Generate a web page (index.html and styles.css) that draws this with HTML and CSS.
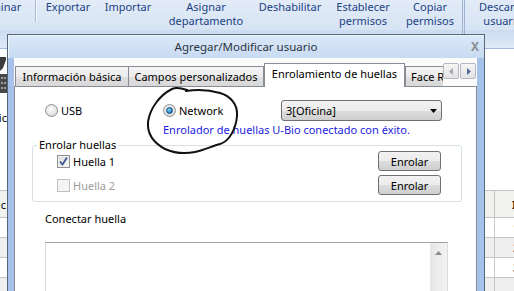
FILE: index.html
```html
<!DOCTYPE html>
<html lang="es">
<head>
    <meta charset="UTF-8">
    <meta name="viewport" content="width=device-width, initial-scale=1.0">
    <title>Agregar/Modificar usuario</title>
    <link rel="stylesheet" href="styles.css">
</head>
<body>
    <!-- Ventana principal (detrás del diálogo) -->
    <div class="app">
        <div class="ribbon">
            <div class="rb-btn w-elim">Eliminar</div>
            <div class="rb-sep"></div>
            <div class="rb-btn w-exp">Exportar</div>
            <div class="rb-btn w-imp">Importar</div>
            <div class="rb-btn w-asig">Asignar<br>departamento</div>
            <div class="rb-btn w-desh">Deshabilitar</div>
            <div class="rb-btn w-est">Establecer<br>permisos</div>
            <div class="rb-btn w-cop">Copiar<br>permisos</div>
            <div class="rb-sep doble"></div>
            <div class="rb-btn w-desc">Descargar<br>usuarios</div>
        </div>
        <div class="ribbon-foot">
            <span class="grp-label">Posibles usuarios</span>
        </div>
        <div class="work">
            <div class="side">
                <svg class="side-icon" width="7" height="36" viewBox="0 0 7 36">
                    <path d="M0 0 H6 L6 3 L3 11 L0 14 Z" fill="#3d3d3d"/>
                    <rect x="0" y="17" width="7" height="19" fill="#474747"/>
                    <rect x="1" y="20" width="2" height="2" fill="#9a9a9a"/>
                    <rect x="4" y="20" width="2" height="2" fill="#9a9a9a"/>
                    <rect x="1" y="25" width="2" height="2" fill="#9a9a9a"/>
                    <rect x="4" y="25" width="2" height="2" fill="#9a9a9a"/>
                    <rect x="1" y="30" width="2" height="2" fill="#9a9a9a"/>
                    <rect x="4" y="30" width="2" height="2" fill="#9a9a9a"/>
                </svg>
                <div class="side-text">Básic</div>
            </div>
        </div>
        <table class="grid">
            <colgroup>
                <col class="c1"><col class="c2"><col class="c3">
            </colgroup>
            <thead>
                <tr><th class="th-left">Básic</th><th></th><th class="th-id">ID</th></tr>
            </thead>
            <tbody>
                <tr><td></td><td></td><td class="td-id">1</td></tr>
                <tr class="alt"><td></td><td></td><td class="td-id">2</td></tr>
                <tr><td></td><td></td><td class="td-id">3</td></tr>
                <tr class="alt"><td></td><td></td><td></td></tr>
            </tbody>
        </table>
    </div>

    <!-- Diálogo -->
    <div class="dialog">
        <div class="titlebar">
            <span class="title">Agregar/Modificar usuario</span>
            <span class="close">X</span>
        </div>
        <div class="client">
            <div class="tabrow">
                <div class="tabs">
                    <div class="tab t1">Información básica</div>
                    <div class="tab t2">Campos personalizados</div>
                    <div class="tab active">Enrolamiento de huellas</div>
                    <div class="tab t4">Face Reconocimiento</div>
                </div>
                <div class="tab-arrows">
                    <div class="arr">
                        <svg width="5" height="7" viewBox="0 0 5 7"><path d="M4 0 V7 L0 3.5 Z" fill="#a3a8b3"/></svg>
                    </div>
                    <div class="arr">
                        <svg width="5" height="7" viewBox="0 0 5 7"><path d="M1 0 V7 L5 3.5 Z" fill="#55699c"/></svg>
                    </div>
                </div>
            </div>

            <div class="panel">
                <div class="row-device">
                    <label class="opt usb"><span class="radio"></span>USB</label>
                    <label class="opt net"><span class="radio on"></span>Network</label>
                    <div class="select">
                        <span>3[Oficina]</span>
                        <svg width="7" height="4" viewBox="0 0 7 4"><path d="M0 0 H7 L3.5 4 Z" fill="#000"/></svg>
                    </div>
                </div>
                <div class="status">Enrolador de huellas U-Bio conectado con éxito.</div>

                <fieldset class="group">
                    <legend>Enrolar huellas</legend>
                    <div class="finger">
                        <span class="check on">
                            <svg width="11" height="11" viewBox="0 0 11 11"><path d="M2 5.5 L4.5 8.5 L9 1.5" fill="none" stroke="#3f5690" stroke-width="1.8"/></svg>
                        </span>
                        <span class="finger-name">Huella 1</span>
                        <button class="btn">Enrolar</button>
                    </div>
                    <div class="finger off">
                        <span class="check"></span>
                        <span class="finger-name">Huella 2</span>
                        <button class="btn">Enrolar</button>
                    </div>
                </fieldset>

                <div class="conn-label">Conectar huella</div>
                <div class="log">
                    <div class="log-scroll">
                        <svg width="7" height="4" viewBox="0 0 7 4"><path d="M0 4 L3.5 0 L7 4 Z" fill="#8a8a8a"/></svg>
                    </div>
                </div>
            </div>
        </div>
    </div>

    <!-- Marca a mano alrededor de Network -->
    <svg class="mark" width="514" height="291" viewBox="0 0 514 291">
        <path d="M187 90 C181 88 176 87 172 89 C160 95 150 108 148 122 C147 134 154 143 165 149 C174 153 185 154 195 152 C205 150 212 146 220 144 C230 141 236 128 237 116 C238 104 230 96 220 93 C210 90 198 89 186 91" fill="none" stroke="#111" stroke-width="2" stroke-linecap="round"/>
    </svg>
</body>
</html>
```

FILE: styles.css
```css
body {
    margin: 0;
    width: 514px;
    height: 291px;
    overflow: hidden;
    position: relative;
    background: #fff;
    font-family: "Noto Sans", "Open Sans", sans-serif;
    font-size: 11px;
    color: #000;
}

/* ventana principal */
.ribbon {
    height: 30px;
    display: flex;
    background: linear-gradient(#e2ebf7, #d7e4f4);
    color: #1b4282;
    line-height: 14px;
}
.rb-btn {
    flex: none;
    text-align: center;
    margin-left: 4px;
    white-space: nowrap;
}
.w-elim { width: 60px; margin-left: -30px; }
.w-exp { width: 56px; }
.w-imp { width: 56px; }
.w-asig { width: 92px; }
.w-desh { width: 68px; }
.w-est { width: 70px; }
.w-cop { width: 56px; }
.w-desc { width: 75px; margin-left: 5px; }
.rb-sep {
    flex: none;
    width: 1px;
    height: 22px;
    margin-left: 5px;
    background: #a9bcd6;
    box-shadow: 1px 0 0 #f3f7fc;
}
.rb-sep.doble {
    width: 1px;
    height: 34px;
    margin-left: 4px;
    background: #9fb3cf;
    box-shadow: 2px 0 0 #9fb3cf;
}
.ribbon-foot {
    height: 18px;
    background: linear-gradient(#cbdbf0, #dfe9f6);
    border-bottom: 1px solid #a3bbdc;
}
.grp-label {
    display: block;
    margin-left: 105px;
    padding-top: 1px;
    color: #4f6e9e;
    line-height: 14px;
}
.work {
    height: 141px;
}
.side {
    width: 7px;
    overflow: hidden;
    display: flex;
    flex-direction: column;
    align-items: flex-end;
}
.side-icon {
    display: block;
    margin-top: 8px;
    flex: none;
}
.side-text {
    margin-top: 17px;
    line-height: 16px;
    white-space: nowrap;
}
.grid {
    table-layout: fixed;
    width: 600px;
    margin-left: -42px;
    border-collapse: collapse;
}
.grid .c1 { width: 49px; }
.grid .c2 { width: 487px; }
.grid .c3 { width: 64px; }
.grid th, .grid td {
    border: 1px solid #c6c6c6;
    padding: 0;
    white-space: nowrap;
    overflow: hidden;
}
.grid th {
    height: 26px;
    background: #f1f1ed;
    font-weight: normal;
}
.grid td {
    height: 19px;
}
.grid tr.alt td {
    background: #efefef;
}
.th-left {
    text-align: right;
    padding-right: 1px !important;
}
.th-id {
    text-align: left;
    padding-left: 17px !important;
    font-weight: bold !important;
    color: #4a1800;
}
.td-id {
    padding-left: 18px !important;
    color: #1c3f7c;
    font-weight: bold;
}

/* diálogo */
.dialog {
    position: absolute;
    left: 7px;
    top: 34px;
    width: 476px;
    height: 270px;
    border: 1px solid #58667a;
    background: #a6c2e9;
    display: flex;
    flex-direction: column;
}
.titlebar {
    height: 23px;
    flex: none;
    display: flex;
    align-items: center;
    justify-content: center;
    position: relative;
    background: linear-gradient(#dbe8f8, #c8dbf2);
    box-shadow: inset 1px 1px 0 #eef4fc;
}
.title {
    color: #2b3340;
    font-size: 11.5px;
}
.close {
    position: absolute;
    right: 5px;
    top: 3px;
    color: #8d8f94;
    font-weight: bold;
    font-size: 12px;
}
.client {
    flex: 1;
    margin: 0 7px 0 6px;
    background: #fbfbfb;
    display: flex;
    flex-direction: column;
}
.tabrow {
    height: 29px;
    flex: none;
    display: flex;
    position: relative;
    z-index: 2;
}
.tabs {
    width: 428px;
    padding-left: 1px;
    display: flex;
    align-items: flex-end;
    overflow: hidden;
}
.tab {
    flex: none;
    box-sizing: border-box;
    height: 20px;
    margin-bottom: 1px;
    padding-top: 2px;
    border: 1px solid #898c95;
    border-bottom: none;
    background: linear-gradient(#f4f4f4 0, #ececec 50%, #e0e0e0 51%, #d8d8d8 100%);
    text-align: center;
    line-height: 16px;
    white-space: nowrap;
    overflow: hidden;
}
.tab.t1 { width: 114px; }
.tab.t2 { width: 136px; margin-left: -1px; }
.tab.active {
    width: 141px;
    height: 24px;
    margin-bottom: 0;
    padding-top: 2px;
    background: #fff;
}
.tab.t4 { width: 62px; text-align: left; padding-left: 5px; }
.tab-arrows {
    display: flex;
    gap: 1px;
    margin-top: 5px;
    margin-left: 0;
}
.arr {
    width: 16px;
    height: 16px;
    box-sizing: border-box;
    border: 1px solid #b4b8c0;
    border-radius: 2px;
    background: linear-gradient(#f6f6f6, #e2e2e2);
    display: flex;
    align-items: center;
    justify-content: center;
}
.panel {
    flex: 1;
    margin-top: -1px;
    border: 1px solid #898c95;
    background: #fff;
}
.row-device {
    display: flex;
    align-items: center;
    height: 21px;
    margin-top: 13px;
}
.opt {
    display: flex;
    align-items: center;
    gap: 3px;
    flex: none;
}
.opt.usb { width: 118px; margin-left: 30px; }
.opt.net { width: 118px; }
.radio {
    width: 13px;
    height: 13px;
    box-sizing: border-box;
    border-radius: 50%;
    border: 1px solid #8e8f8f;
    background: radial-gradient(circle at 45% 40%, #ffffff 0, #e9e9e9 45%, #cfcfcf 100%);
    display: flex;
    align-items: center;
    justify-content: center;
}
.radio.on::after {
    content: "";
    width: 5px;
    height: 5px;
    border-radius: 50%;
    border: 1px solid #1a4c7c;
    background: radial-gradient(circle at 40% 35%, #8fe0ff 0, #2f8fcf 55%, #164a82 100%);
}
.select {
    width: 161px;
    height: 21px;
    box-sizing: border-box;
    border: 1px solid #707070;
    border-radius: 3px;
    background: linear-gradient(#f2f2f2 0, #ebebeb 50%, #dddddd 51%, #cfcfcf 100%);
    display: flex;
    align-items: center;
    justify-content: space-between;
    padding: 0 4px 0 4px;
}
.status {
    margin: 1px 0 0 148px;
    line-height: 16px;
    color: #1c1ce0;
}
.group {
    margin: 1px 0 0 17px;
    width: 430px;
    box-sizing: border-box;
    padding: 0 4px 6px 4px;
    border: 1px solid #d5dfe5;
    border-radius: 3px;
}
.group legend {
    padding: 0 2px;
    line-height: 12px;
}
.finger {
    display: flex;
    align-items: center;
    height: 20px;
}
.finger + .finger {
    margin-top: 4px;
}
.check {
    width: 13px;
    height: 13px;
    box-sizing: border-box;
    margin-left: 20px;
    border: 1px solid #8e8f8f;
    background: linear-gradient(135deg, #d9d9d9, #fbfbfb);
    box-shadow: inset 0 0 0 1px #f4f4f4;
    display: flex;
    align-items: center;
    justify-content: center;
}
.finger-name {
    margin-left: 3px;
}
.finger.off .check {
    border-color: #c0c0c0;
    background: #f4f4f4;
}
.finger.off .finger-name {
    color: #9d9d9d;
}
.btn {
    margin-left: auto;
    margin-right: 16px;
    width: 63px;
    height: 20px;
    padding: 0;
    border: 1px solid #707070;
    border-radius: 3px;
    background: linear-gradient(#f2f2f2 0, #ebebeb 50%, #dddddd 51%, #cfcfcf 100%);
    font-family: inherit;
    font-size: 11px;
    color: #000;
}
.conn-label {
    margin: 9px 0 0 30px;
    line-height: 16px;
}
.log {
    margin: 15px 0 0 30px;
    width: 403px;
    height: 80px;
    box-sizing: border-box;
    border: 1px solid #dadada;
    border-top-color: #a3a3a3;
    display: flex;
    justify-content: flex-end;
}
.log-scroll {
    width: 17px;
    background: linear-gradient(90deg, #e6e6e6, #f3f3f3);
    display: flex;
    justify-content: center;
    padding-top: 8px;
}
.log-scroll svg {
    display: block;
}

/* marca dibujada a mano */
.mark {
    position: absolute;
    left: 0;
    top: 0;
    pointer-events: none;
}
```
